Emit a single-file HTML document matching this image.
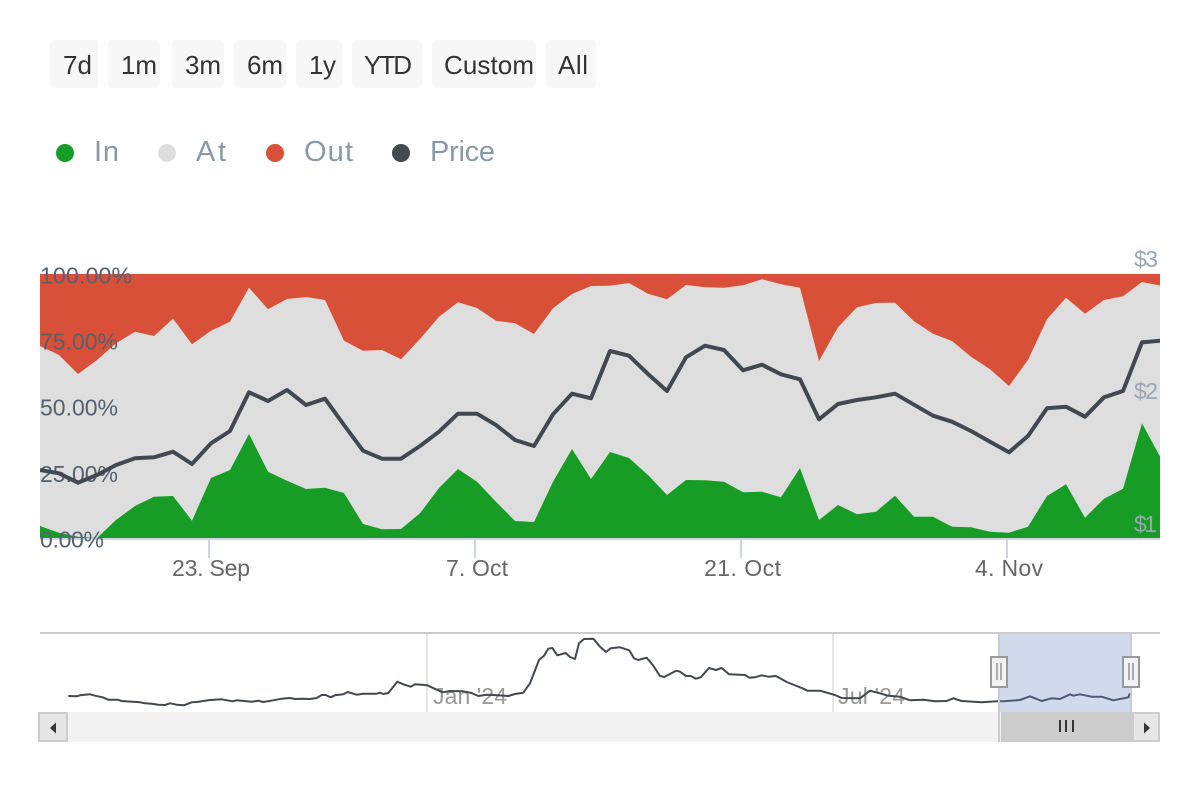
<!DOCTYPE html>
<html><head><meta charset="utf-8"><style>
html,body{margin:0;padding:0;background:#fff;width:1200px;height:800px;overflow:hidden}
svg{display:block}
text{font-family:"Liberation Sans",sans-serif}
.b{font-size:26px;fill:#333}
.l{font-size:29px;fill:#8a99a6}
.y{font-size:23px;fill:#55606f}
.r{font-size:23px;fill:#9aa6b4}
.x{font-size:23px;fill:#666}
.n{font-size:23px;fill:#999}
</style></head><body>
<svg width="1200" height="800" viewBox="0 0 1200 800" xmlns="http://www.w3.org/2000/svg">
<defs><clipPath id="c"><rect x="40" y="274" width="1120" height="264"/></clipPath></defs>
<g fill="#f7f7f7">
<rect x="50" y="40" width="48" height="48" rx="4"/><rect x="108" y="40" width="52" height="48" rx="4"/><rect x="172" y="40" width="52" height="48" rx="4"/><rect x="234" y="40" width="52" height="48" rx="4"/><rect x="296" y="40" width="46" height="48" rx="4"/><rect x="352" y="40" width="70" height="48" rx="4"/><rect x="432" y="40" width="104" height="48" rx="4"/><rect x="546" y="40" width="50" height="48" rx="4"/>
</g>
<text class="b" x="63" y="74" textLength="29">7d</text>
<text class="b" x="121" y="74" textLength="36">1m</text>
<text class="b" x="185" y="74" textLength="36">3m</text>
<text class="b" x="247" y="74" textLength="36">6m</text>
<text class="b" x="309" y="74" textLength="27">1y</text>
<text class="b" x="364" y="74" textLength="48">YTD</text>
<text class="b" x="444" y="74" textLength="90">Custom</text>
<text class="b" x="558" y="74" textLength="30">All</text>
<circle cx="65" cy="153" r="9" fill="#179d26"/><circle cx="167" cy="153" r="9" fill="#dedede"/><circle cx="275" cy="153" r="9" fill="#d95038"/><circle cx="401" cy="153" r="9" fill="#44484f"/>
<text class="l" x="94" y="161" textLength="25">In</text>
<text class="l" x="196" y="161" textLength="30">At</text>
<text class="l" x="304" y="161" textLength="49">Out</text>
<text class="l" x="430" y="161" textLength="65">Price</text>
<rect x="40" y="273" width="1120" height="1" fill="#f5f5f5"/>
<g clip-path="url(#c)">
<rect x="40" y="274" width="1120" height="264" fill="#d95038"/>
<polygon fill="#dedede" points="40,538 40,346 59,355 78,374 97,360 116,343.3 135,331.7 154,336 173,318.7 192,344.3 211,330.7 230,321.7 249,287.7 268,309.3 287,299 306,297 325,300 344,340.7 363,350.7 382,350 401,359.3 420,339 439,316.7 458,302.3 477,308 496,320.7 515,323.3 534,334 553,308.3 572,294 591,286 610,285.7 629,283 648,293.7 667,299.3 686,285 705,287.3 724,287.7 743,285.3 762,279.3 781,284.3 800,287.7 819,361 838,327.3 857,307.3 876,303 895,302.7 914,321.3 933,333.7 952,341 971,356.7 990,369.3 1009,386 1028,360 1047,319.3 1066,297.7 1085,313.7 1104,300 1123,296.3 1142,282 1161,285.7 1161,538"/>
<polygon fill="#179d26" points="40,538 40,526 59,532.7 78,536.7 97,538 116,520 135,506 154,496.7 173,496 192,520.7 211,478 230,470 249,434 268,471.7 287,480.7 306,489 325,487.7 344,493 363,524 382,529.3 401,529 420,513.3 439,488 458,469 477,481.7 496,501.7 515,521 534,522 553,481.7 572,449 591,479 610,452 629,458 648,475 667,495 686,480 705,480.3 724,481.7 743,492.3 762,491.7 781,497.3 800,468 819,520 838,505 857,514.3 876,511.7 895,495.7 914,516.7 933,516.7 952,526.7 971,527.3 990,531.7 1009,532.7 1028,526.7 1047,496 1066,484.3 1085,517.7 1104,498.7 1123,488.7 1142,423.3 1161,458.3 1161,538"/>
</g>
<rect x="40" y="538" width="1120" height="2" fill="#ccd6eb"/>
<g fill="#ccd6eb"><rect x="208" y="540" width="2" height="18"/><rect x="474" y="540" width="2" height="18"/><rect x="740" y="540" width="2" height="18"/><rect x="1006" y="540" width="2" height="18"/></g>
<text class="y" x="40" y="283.500" textLength="92">100.00%</text>
<text class="y" x="40" y="349.500" textLength="78">75.00%</text>
<text class="y" x="40" y="415.500" textLength="78">50.00%</text>
<text class="y" x="40" y="482" textLength="78">25.00%</text>
<text class="y" x="40" y="547.500" textLength="64">0.00%</text>
<text class="r" x="1134" y="267" textLength="24">$3</text>
<text class="r" x="1134" y="399" textLength="24">$2</text>
<text class="r" x="1134" y="532" textLength="23">$1</text>
<text class="x" x="172" y="576" textLength="78">23. Sep</text>
<text class="x" x="446" y="576" textLength="62">7. Oct</text>
<text class="x" x="704" y="576" textLength="77">21. Oct</text>
<text class="x" x="975" y="576" textLength="68">4. Nov</text>
<svg x="40" y="270" width="1120" height="275" viewBox="40 270 1120 275">
<polyline fill="none" stroke="#434850" stroke-width="4" stroke-linejoin="round" points="40,470 59,473.3 78,482.7 97,475 116,465 135,458.3 154,457.3 173,451.7 192,464 211,443.3 230,431 249,392.3 268,401 287,390 306,405 325,398.7 344,425 363,450.7 382,458.7 401,458.7 420,446 439,431.7 458,413.700 477,413.700 496,425 515,440 534,446 553,414.3 572,393.7 591,398.3 610,351 629,355.7 648,374 667,391 686,357.3 705,345.7 724,350 743,370.3 762,364.7 781,374.3 800,379.3 819,419.3 838,404 857,400 876,397.3 895,393.7 914,404.7 933,415.7 952,421.7 971,431 990,441.7 1009,452.3 1028,436 1047,408.3 1066,406.7 1085,416.7 1104,397.3 1123,391 1142,342.3 1161,340.700"/>
</svg>
<rect x="40" y="632" width="1120" height="2" fill="#ccc"/>
<rect x="426" y="634" width="2" height="78" fill="#e6e6e6"/><rect x="832" y="634" width="2" height="78" fill="#e6e6e6"/>
<text class="n" x="433" y="704" textLength="74">Jan '24</text>
<text class="n" x="838" y="704" textLength="67">Jul '24</text>
<polyline fill="none" stroke="#434850" stroke-width="2" stroke-linejoin="round" points="68.3,696 76.7,696.3 80,695.3 90,694.3 95,695.7 102.7,697.3 108.3,699.7 117.3,699.7 121.7,701 140,702.3 145,703.3 151.7,703.7 158.3,704.7 165,705 170,703.3 176.7,704.7 184,705.3 191.7,702.3 196.7,702 210,700 221.7,699.3 232.3,701.3 236.7,700.3 251.7,701.7 258.3,700.7 263.3,702 273.3,700.3 281.7,698.7 290,698 295,699 301.7,698.7 310,699 316.7,698 321.7,695 325.7,695 330.7,697.3 335,695.3 343.3,694.3 347.7,692 356.7,694.7 363.3,693.7 376.7,693.7 380,692.7 383.3,694 388.3,693 397.3,681.7 403.3,684.3 410.7,686.7 415,684.3 427.3,685.3 436.7,689.7 442.7,692.3 450,691 463.3,691.3 471.7,693 478.3,696 486.7,694.7 493.3,695 508.3,696 515,694 523.3,692.7 530,683.3 539,660 544,655.7 548.3,648.7 552.3,648 557.3,655.3 565.7,653 570,657 575,659 579,643.3 584,639 593.3,638.7 600,646.7 606,652 610.7,648.3 620,647.3 629.3,650.3 634,658.3 638.3,660 646.7,657.7 653.3,665.7 660,676 664.3,677 676,670.7 680,671.7 686,676 690.7,676 696,678.7 700.7,677.3 709,668 716,670 721.7,668 729,674.3 745,675 749.3,677.7 755,677.3 761.7,675.3 768.3,676.7 776,676 786.7,682 796.7,686 803.3,688.7 807.3,690.7 820,690.7 835,695 841.7,698 860,698.300 870,690.7 880,693.3 888,695.7 900,696.7 910,700.3 923.3,699.7 935,701.3 946.7,701 953.3,698.3 961.7,701 981.7,702.3 996.7,701.3 1003.3,701.3 1020,700 1030,696.3 1041.7,701 1051.7,698.3 1060,699 1070,694.3 1073.3,695.7 1080,694.3 1091.7,696.7 1101.7,696.7 1113.3,700.3 1125,698 1128.3,697.3 1130,693.3"/>
<rect x="999" y="634" width="132" height="78" fill="#6685c2" fill-opacity="0.3"/>
<rect x="998" y="634" width="2" height="78" fill="#ccc"/><rect x="1130" y="634" width="2" height="78" fill="#ccc"/>
<rect x="40" y="712" width="1120" height="30" fill="#f2f2f2"/>
<rect x="39" y="713" width="28" height="28" fill="#e6e6e6" stroke="#ccc" stroke-width="2"/>
<polygon points="50,728 56,722.500 56,733.500" fill="#333"/>
<rect x="998" y="712" width="134" height="30" fill="#ccc"/><rect x="1000" y="712" width="1" height="30" fill="#f2f2f2"/>
<rect x="1133" y="713" width="26" height="28" fill="#e6e6e6" stroke="#ccc" stroke-width="2"/>
<polygon points="1150,728 1144,722.500 1144,733.500" fill="#333"/>
<g fill="#333"><rect x="1059" y="720" width="2" height="12"/><rect x="1065" y="720" width="2" height="12"/><rect x="1072" y="720" width="2" height="12"/></g>
<rect x="991" y="657" width="16" height="30" fill="#f2f2f2" stroke="#999" stroke-width="2"/>
<rect x="1123" y="657" width="16" height="30" fill="#f2f2f2" stroke="#999" stroke-width="2"/>
<g fill="#aaa"><rect x="996" y="663" width="2" height="17"/><rect x="1000" y="663" width="2" height="17"/><rect x="1128" y="663" width="2" height="17"/><rect x="1132" y="663" width="2" height="17"/></g>
</svg>
</body></html>
